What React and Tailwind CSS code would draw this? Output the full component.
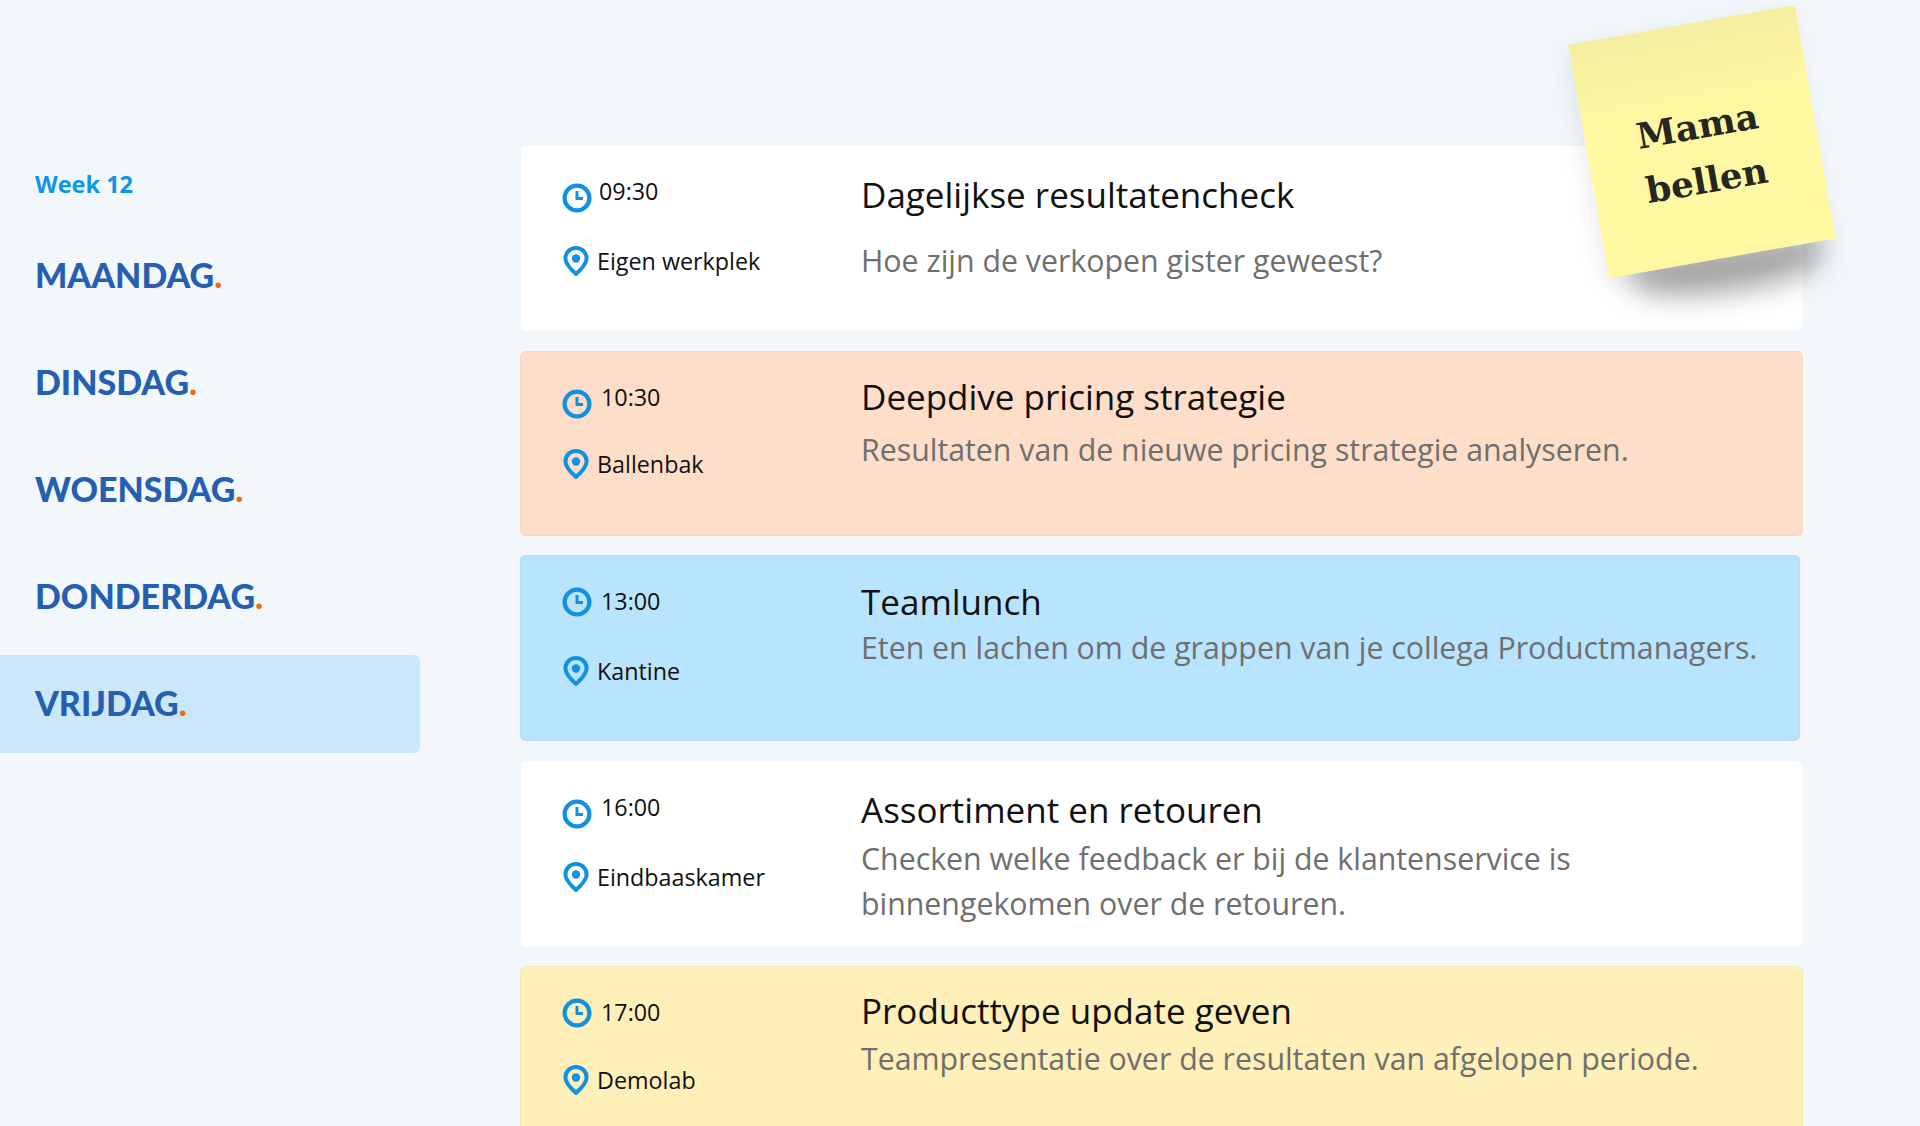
const DAYS = [
  { name: "MAANDAG", active: false },
  { name: "DINSDAG", active: false },
  { name: "WOENSDAG", active: false },
  { name: "DONDERDAG", active: false },
  { name: "VRIJDAG", active: true },
];

const CARDS = [
  { time: "09:30", place: "Eigen werkplek", title: "Dagelijkse resultatencheck", desc: "Hoe zijn de verkopen gister geweest?",
    card: "bg-white w-[1283px] h-[187px] mb-[19px]", left: "pt-[28px]", timeX: "ml-[7px]", clock: "mt-[9px]", placeM: "mt-[36px]", titleP: "pt-[25px]", descM: "mt-[19px]" },
  { time: "10:30", place: "Ballenbak", title: "Deepdive pricing strategie", desc: "Resultaten van de nieuwe pricing strategie analyseren.",
    card: "bg-[#fedec9] w-[1283px] h-[185px] mb-[19px]", left: "pt-[28px]", timeX: "ml-[9px]", clock: "mt-[9px]", placeM: "mt-[33px]", titleP: "pt-[21px]", descM: "mt-[6px]" },
  { time: "13:00", place: "Kantine", title: "Teamlunch", desc: "Eten en lachen om de grappen van je collega Productmanagers.",
    card: "bg-[#b9e4fe] w-[1280px] h-[186px] mb-[19px]", left: "pt-[28px]", timeX: "ml-[9px]", clock: "mt-[3px]", placeM: "mt-[36px]", titleP: "pt-[22px]", descM: "-mt-px" },
  { time: "16:00", place: "Eindbaaskamer", title: "Assortiment en retouren", desc: "Checken welke feedback er bij de klantenservice is binnengekomen over de retouren.",
    card: "bg-white w-[1283px] h-[188px] mb-[18px]", left: "pt-[29px]", timeX: "ml-[9px]", clock: "mt-[9px]", placeM: "mt-[36px]", titleP: "pt-[25px]", descM: "mt-[2px]" },
  { time: "17:00", place: "Demolab", title: "Producttype update geven", desc: "Teampresentatie over de resultaten van afgelopen periode.",
    card: "bg-[#fef0b8] w-[1283px] h-[186px]", left: "pt-[28px]", timeX: "ml-[9px]", clock: "mt-[3px]", placeM: "mt-[34px]", titleP: "pt-[20px]", descM: "mt-px" },
];

function ClockIcon() {
  return (
    <svg width="30" height="30" viewBox="0 0 30 30" fill="none" className="shrink-0">
      <circle cx="15" cy="15" r="12.4" stroke="#1191e0" strokeWidth="4.2" />
      <path d="M15 8V15.6H21" stroke="#1191e0" strokeWidth="3" />
    </svg>
  );
}

function PinIcon() {
  return (
    <svg width="26" height="30" viewBox="0 0 26 30" fill="none" className="shrink-0">
      <path d="M13 28C8 23.5 2.4 18 2.4 12.5C2.4 6.5 7 2 13 2C19 2 23.6 6.5 23.6 12.5C23.6 18 18 23.5 13 28Z" stroke="#1191e0" strokeWidth="4" strokeLinejoin="round" />
      <circle cx="13" cy="12.5" r="4.2" fill="#1191e0" />
    </svg>
  );
}

function Card({ c }) {
  return (
    <div className={`flex shrink-0 rounded-md border border-black/[0.03] pl-[42px] ${c.card}`}>
      <div className={`w-[298px] shrink-0 font-['Open_Sans',sans-serif] text-[#111] text-[23.3px] ${c.left}`}>
        <div className="flex h-[34px] items-start">
          <div className={`-ml-px ${c.clock}`}><ClockIcon /></div>
          <span className={`leading-[34px] ${c.timeX}`}>{c.time}</span>
        </div>
        <div className={`flex h-[34px] items-center ${c.placeM}`}>
          <PinIcon />
          <span className="ml-[8px] leading-[34px]">{c.place}</span>
        </div>
      </div>
      <div className={`min-w-0 flex-1 pr-[30px] font-['Open_Sans',sans-serif] ${c.titleP}`}>
        <div className="text-[35px] leading-[48px] text-[#111]">{c.title}</div>
        <div className={`text-[30.3px] leading-[45px] text-[#6f6f6f] ${c.descM}`}>{c.desc}</div>
      </div>
    </div>
  );
}

export default function App() {
  return (
    <div className="relative flex h-[1126px] w-full overflow-hidden bg-[#f2f7fc]">
      <aside className="w-[420px] shrink-0 pt-[167px]">
        <div className="pl-[35px] font-['Open_Sans',sans-serif] text-[23.5px] font-bold leading-[34px] text-[#0b96e6]">Week 12</div>
        <nav className="mt-[26px] flex flex-col gap-[9px]">
          {DAYS.map((d) => (
            <div
              key={d.name}
              className={`flex h-[98px] items-center rounded-r-md pb-[4px] pl-[35px] font-['Lato',sans-serif] text-[34px] font-black text-[#265fb0] ${d.active ? "bg-[#cbe8fb]" : ""}`}
            >
              {d.name}
              <span className="text-[#f26a0f]">.</span>
            </div>
          ))}
        </nav>
      </aside>
      <main className="ml-[100px] flex flex-col pt-[145px]">
        {CARDS.map((c) => <Card key={c.title} c={c} />)}
      </main>
      <div className="absolute left-[1632px] top-[248px] h-[44px] w-[190px] -rotate-[8deg] rounded-b-[50%] bg-black/35 blur-[14px]" />
      <div className="absolute left-[1587px] top-[23px] flex h-[237px] w-[230px] -rotate-[10deg] items-center justify-center bg-[linear-gradient(180deg,#f4eea0_0%,#fef8a2_36%,#fff8a3_100%)] pt-[22px] pr-[4px] text-center font-['DejaVu_Serif',serif] text-[35.5px] font-bold leading-[55px] text-[#262622] shadow-[-6px_6px_24px_rgba(0,0,0,0.07)]">
        <div>Mama<br />bellen</div>
      </div>
    </div>
  );
}
